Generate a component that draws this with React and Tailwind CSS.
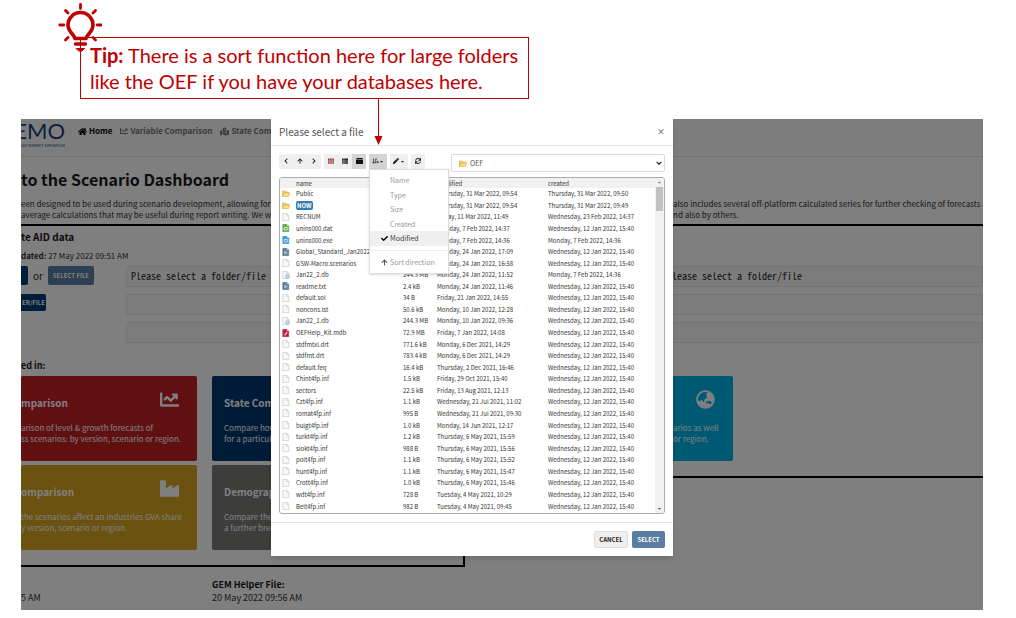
import React from "react";
import {
  FaHome, FaChartLine, FaMapMarkedAlt, FaIndustry, FaGlobeAsia,
  FaChevronLeft, FaChevronRight, FaArrowUp, FaTh, FaThList,
  FaPen, FaSync, FaCheck, FaCaretDown,
} from "react-icons/fa";

const WED = "Wednesday, 12 Jan 2022, 15:40";

const files = [
  ["folder", "Public", "", "Thursday, 31 Mar 2022, 09:54", "Thursday, 31 Mar 2022, 09:50"],
  ["folder", "NOW", "", "Thursday, 31 Mar 2022, 09:54", "Thursday, 31 Mar 2022, 09:49"],
  ["file", "RECNUM", "", "Friday, 11 Mar 2022, 11:49", "Wednesday, 23 Feb 2022, 14:37"],
  ["green", "unins000.dat", "", "Monday, 7 Feb 2022, 14:37", WED],
  ["blue", "unins000.exe", "", "Monday, 7 Feb 2022, 14:36", "Monday, 7 Feb 2022, 14:36"],
  ["slate", "Global_Standard_Jan2022", "", "Monday, 24 Jan 2022, 17:09", WED],
  ["file", "GSW-Macro.scenarios", "", "Monday, 24 Jan 2022, 16:58", WED],
  ["db", "Jan22_2.db", "244.3 MB", "Monday, 24 Jan 2022, 11:52", "Monday, 7 Feb 2022, 14:36"],
  ["slate", "readme.txt", "2.4 kB", "Monday, 24 Jan 2022, 11:46", WED],
  ["file", "default.sol", "34 B", "Friday, 21 Jan 2022, 14:55", WED],
  ["file", "noncons.lst", "50.6 kB", "Monday, 10 Jan 2022, 12:28", WED],
  ["db", "Jan22_1.db", "244.3 MB", "Monday, 10 Jan 2022, 09:36", WED],
  ["red", "OEFHelp_Kit.mdb", "72.9 MB", "Friday, 7 Jan 2022, 14:08", WED],
  ["file", "stdfmtxl.drt", "771.6 kB", "Monday, 6 Dec 2021, 14:29", WED],
  ["file", "stdfmt.drt", "783.4 kB", "Monday, 6 Dec 2021, 14:29", WED],
  ["file", "default.feq", "16.4 kB", "Thursday, 2 Dec 2021, 16:46", WED],
  ["file", "Chint4fp.inf", "1.5 kB", "Friday, 29 Oct 2021, 15:40", WED],
  ["file", "sectors", "22.5 kB", "Friday, 13 Aug 2021, 12:13", WED],
  ["file", "Czt4fp.inf", "1.1 kB", "Wednesday, 21 Jul 2021, 11:02", WED],
  ["file", "romat4fp.inf", "995 B", "Wednesday, 21 Jul 2021, 09:30", WED],
  ["file", "bulgt4fp.inf", "1.0 kB", "Monday, 14 Jun 2021, 12:17", WED],
  ["file", "turkt4fp.inf", "1.2 kB", "Thursday, 6 May 2021, 15:59", WED],
  ["file", "slokt4fp.inf", "988 B", "Thursday, 6 May 2021, 15:56", WED],
  ["file", "polt4fp.inf", "1.1 kB", "Thursday, 6 May 2021, 15:52", WED],
  ["file", "hunt4fp.inf", "1.1 kB", "Thursday, 6 May 2021, 15:47", WED],
  ["file", "Crott4fp.inf", "1.0 kB", "Thursday, 6 May 2021, 15:46", WED],
  ["file", "wdt4fp.inf", "728 B", "Tuesday, 4 May 2021, 10:29", WED],
  ["file", "Belt4fp.inf", "982 B", "Tuesday, 4 May 2021, 09:45", WED],
];

const fills = { green: "#5cab3c", blue: "#2f97dd", slate: "#5c7790", red: "#c21f45" };

function FolderIcon({ className }) {
  return (
    <svg viewBox="0 0 16 14" className={className} aria-hidden="true">
      <path d="M1 13V2h5l1.500 2H13v2" fill="#f6cf6a" stroke="#d39a2c" />
      <path d="M1 13 3.500 6H15.500L13 13Z" fill="#fbdf8e" stroke="#d39a2c" />
    </svg>
  );
}

function FileIcon({ kind }) {
  if (kind === "folder") return <FolderIcon className="block h-[7px] w-2" />;
  const fill = fills[kind];
  return (
    <svg viewBox="0 0 16 16" className="block size-2" aria-hidden="true">
      <path d="M1.500 .7H9.500L13.500 4.700V15.300H1.500Z" fill={fill || "#f7f9f9"} stroke={fill || "#b3bbbb"} />
      <path d="M9.500 .7V4.700H13.500" fill={fill ? "#dfe9ee" : "#e3e8e8"} stroke={fill || "#b3bbbb"} />
      {(kind === "green" || kind === "blue") && <path d="M4.500 7h6v5h-6z" fill="none" stroke="#fff" strokeWidth="1.500" />}
      {kind === "slate" && <path d="M4 6.500h6M4 9h7M4 11.500h7" stroke="#dde6ee" strokeWidth="1.200" />}
      {kind === "red" && <path d="M4 12.500 9.500 6l1.500 1.500L5.500 13Z" fill="#fff" />}
      {kind === "db" && <circle cx="11" cy="11" r="4" fill="#c3d5e6" stroke="#8aa5bd" />}
    </svg>
  );
}

function Bulb() {
  return (
    <svg viewBox="0 0 44 50" className="absolute -top-[35px] -left-[23px] h-[50px] w-11" fill="none" stroke="#c00000" strokeLinecap="round" aria-hidden="true">
      <path d="M17 35.500C16 31 10 29 10 22a12.500 12.500 0 0 1 25 0c0 7-6 9-7 13.500Z" fill="#fff" strokeWidth="3.600" strokeLinejoin="round" />
      <path d="M17.500 41h10" strokeWidth="3.400" />
      <path d="M18.500 45.500h8l-2.500 2.500h-3Z" fill="#c00000" strokeWidth="1" strokeLinejoin="round" />
      <path d="M22.500 1.500v4M1.800 22h4M39.200 22h4M7.500 7.500l2.500 2.500M37.500 7.500l-2.500 2.500M7.500 37l2.500-2.500M37.500 37l-2.500-2.500" strokeWidth="2.800" />
    </svg>
  );
}

function SortIcon() {
  return (
    <svg viewBox="0 0 16 14" className="h-[6px] w-[7px]" fill="none" stroke="#222" strokeWidth="1.800" aria-hidden="true">
      <path d="M3.500 1v11M1 9.500l2.500 3 2.500-3M8.500 1.500v11M11 12l2-5 2 5M9.500 2.500h2" />
    </svg>
  );
}

function DetailIcon() {
  return (
    <svg viewBox="0 0 14 12" className="h-[6px] w-[7px]" aria-hidden="true">
      <path d="M1 0h12v2.200H1zM0 3.200h14V12H0z" fill="#111" />
    </svg>
  );
}

function Card({ color, title, lines, icon }) {
  return (
    <a href="#" className={`block h-[85px] overflow-hidden rounded-[2px] pt-[17px] text-white ${color}`}>
      <div className="flex h-5 items-center justify-between pr-[18px]">
        <span className="text-[10px] leading-5 font-bold whitespace-nowrap">{title}</span>
        <span className="-mt-2 text-[19px]">{icon}</span>
      </div>
      <p className="mt-[9px] text-[8px] leading-[11px] whitespace-nowrap">
        {lines[0]}<br />{lines[1]}
      </p>
    </a>
  );
}

function PathField({ label, value }) {
  return (
    <input
      aria-label={label}
      readOnly
      defaultValue={value}
      className="h-[21px] w-full rounded-[2px] border border-[#e8e8e8] bg-[#f9f9f9] px-1 pb-[2px] font-['Noto_Sans_Mono_CJK_SC','Liberation_Mono',monospace] text-[10px] text-[#222]"
    />
  );
}

function Dashboard() {
  return (
    <div className="h-[491px] overflow-hidden bg-white text-[#333]">
      <nav className="flex h-[38px] items-start border-b border-[#e4e4e4] bg-[#fafafa]">
        <a href="#" className="mr-[13px] flex w-11 flex-col items-end overflow-hidden text-[#1c3f7c]">
          <span className="font-['Lato',sans-serif] text-[22px] leading-6">EMO</span>
          <span className="text-[4px] leading-[4px] whitespace-nowrap">NERGY MARKET OPERATOR</span>
        </a>
        <div className="flex gap-2 pt-[5px] text-[8px] leading-[14px] font-bold whitespace-nowrap text-[#777]">
          <a href="#" className="flex items-center gap-[2px] text-black"><FaHome className="text-[9px]" />Home</a>
          <a href="#" className="flex items-center gap-[2px]"><FaChartLine />Variable Comparison</a>
          <a href="#" className="flex items-center gap-[2px]"><FaMapMarkedAlt className="text-[9px]" />State Com</a>
        </div>
      </nav>
      <h1 className="mt-[9px] text-[16px] leading-[26px] font-bold whitespace-nowrap text-[#1a1a1a]">to the Scenario Dashboard</h1>
      <div className="mt-[6px] flex justify-between text-[8px] leading-[11px] whitespace-nowrap">
        <p className="w-[251px]">een designed to be used during scenario development, allowing for s<br />average calculations that may be useful during report writing. We will</p>
        <p className="w-[310px]">also includes several off-platform calculated series for further checking of forecasts a<br />nd also by others.</p>
      </div>
      <div className="mt-1 flex items-start">
        <section className="h-[343px] w-[444px] shrink-0 border-y-2 border-r-2 border-black">
          <h2 className="mt-[3px] text-[10px] leading-4 font-bold text-[#1a1a1a]">te AID data</h2>
          <p className="mt-[5px] text-[8px] leading-3"><b>dated:</b> 27 May 2022 09:51 AM</p>
          <div className="mt-1 flex">
            <div className="w-[105px] shrink-0">
              <div className="flex h-[19px] items-center">
                <button type="button" aria-label="Select folder" className="h-[19px] w-[7px] rounded-r-[2px] bg-[#003a78]" />
                <span className="px-[5px] text-[10px]">or</span>
                <button type="button" className="h-[19px] w-[46px] rounded-[2px] bg-[#5b7ea4] text-[6px] font-bold text-white">SELECT FILE</button>
              </div>
              <button type="button" className="mt-[9px] block h-[17px] w-[25px] rounded-r-[2px] bg-[#003a78] text-[6px] font-bold text-white">ER/FILE</button>
            </div>
            <div className="flex grow flex-col gap-[7px]">
              <PathField label="First path" value="Please select a folder/file" />
              <PathField label="First path, line 2" value="" />
              <PathField label="First path, line 3" value="" />
            </div>
          </div>
          <h2 className="mt-[15px] text-[9px] leading-4 font-bold text-[#1a1a1a]">ed in:</h2>
          <div className="mt-[2px] grid grid-cols-[176px_176px] gap-x-[15px] gap-y-1">
            <Card color="bg-[#c22024]" title="mparison" lines={["arison of level & growth forecasts of", "ss scenarios: by version, scenario or region."]} icon={<FaChartLine />} />
            <Card color="bg-[#003670] pl-3" title="State Com" lines={["Compare how", "for a particul"]} />
            <Card color="bg-[#d6a520]" title="omparison" lines={["the scenarios affect an industries GVA share", "y version, scenario or region."]} icon={<FaIndustry />} />
            <Card color="bg-[#7a7a76] pl-3" title="Demograp" lines={["Compare the", "a further brea"]} />
          </div>
        </section>
        <section className="ml-6 h-[254px] grow border-y-2 border-l-2 border-black pt-10">
          <div className="ml-[171px] flex flex-col gap-[7px]">
            <PathField label="Second path" value="Please select a folder/file" />
            <PathField label="Second path, line 2" value="" />
            <PathField label="Second path, line 3" value="" />
          </div>
          <div className="mt-[33px] ml-[66px] w-[176px]">
            <Card color="bg-[#00b2e6] pl-[116px]" title="" lines={["arios as well", "or region."]} icon={<FaGlobeAsia />} />
          </div>
        </section>
      </div>
      <footer className="mt-[11px] flex text-[9px] leading-[13px] whitespace-nowrap">
        <p className="w-[191px] pt-[13px]">5 AM</p>
        <p><b className="text-[#1a1a1a]">GEM Helper File:</b><br />20 May 2022 09:56 AM</p>
      </footer>
    </div>
  );
}

function ToolButton({ label, active, wide, children }) {
  return (
    <button
      type="button"
      aria-label={label}
      className={`flex h-[15px] items-center justify-center pb-px text-[6px] text-[#222] ${wide ? "w-[18px]" : "w-[14px]"} ${active ? "bg-[#d4d4d4]" : "bg-[#efefef]"}`}
    >
      {children}
    </button>
  );
}

function SortMenu() {
  return (
    <div role="menu" className="absolute top-[15px] left-0 z-10 w-20 border border-[#dcdcdc] bg-white pt-[3px] text-[7px] text-[#999] shadow">
      <div className="grid h-[73px] grid-rows-5">
        {["Name", "Type", "Size", "Created", "Modified"].map((item) => (
          <button
            key={item}
            type="button"
            role="menuitem"
            className={`flex items-center ${item === "Modified" ? "bg-[#f0f0f0] text-[#444]" : ""}`}
          >
            <span className="flex w-5 justify-end pr-[2px] text-[7px] text-black">{item === "Modified" && <FaCheck />}</span>
            {item}
          </button>
        ))}
      </div>
      <button type="button" role="menuitem" className="mt-1 flex h-[23px] w-full items-center border-t border-[#eee]">
        <span className="flex w-5 justify-end pr-[2px] text-[7px] text-[#555]"><FaArrowUp /></span>
        Sort direction
      </button>
    </div>
  );
}

function FileDialog() {
  return (
    <div role="dialog" aria-label="Please select a file" className="w-[402px] bg-white text-[#333] shadow-md">
      <header className="flex h-[27px] items-center justify-between border-b border-[#e5e5e5] px-2">
        <h2 className="text-[10px] leading-3 text-[#555]">Please select a file</h2>
        <button type="button" aria-label="Close" className="text-[8px] leading-3 font-bold text-[#777]">×</button>
      </header>
      <div className="px-2 pt-2">
        <div className="flex items-start justify-between">
          <div className="flex gap-[3px]">
            <div className="flex">
              <ToolButton label="Back"><FaChevronLeft /></ToolButton>
              <ToolButton label="Up"><FaArrowUp /></ToolButton>
              <ToolButton label="Forward"><FaChevronRight /></ToolButton>
            </div>
            <div className="flex">
              <ToolButton label="Icon view"><FaTh className="text-[#8f3d30]" /></ToolButton>
              <ToolButton label="List view"><FaThList /></ToolButton>
              <ToolButton label="Detail view" active><DetailIcon /></ToolButton>
            </div>
            <div className="relative">
              <ToolButton label="Sort" active wide><SortIcon /><FaCaretDown className="text-[5px]" /></ToolButton>
              <SortMenu />
            </div>
            <ToolButton label="Edit" wide><FaPen /><FaCaretDown className="ml-px text-[5px]" /></ToolButton>
            <ToolButton label="Refresh"><FaSync /></ToolButton>
          </div>
          <div className="relative h-[18px] w-[214px]">
            <select aria-label="Folder" className="block h-[18px] w-full appearance-none rounded-[2px] border border-[#d5dde2] bg-white pl-[18px] text-[7px] leading-4 text-[#555]">
              <option>OEF</option>
            </select>
            <FolderIcon className="pointer-events-none absolute top-[6px] left-2 h-[7px] w-2" />
            <svg viewBox="0 0 10 6" className="pointer-events-none absolute top-[7px] right-[3px] h-1 w-[6px]" aria-hidden="true">
              <path d="m1 1 4 4 4-4" fill="none" stroke="#222" strokeWidth="2" />
            </svg>
          </div>
        </div>
        <div className="mt-[5px] flex h-[337px] overflow-hidden rounded-[3px] border border-[#aaa]">
          <table className="h-[334px] grow table-fixed border-collapse text-left text-[6px] leading-[9px] whitespace-nowrap">
            <colgroup>
              <col className="w-4" /><col className="w-[107px]" /><col className="w-[34px]" /><col className="w-[111px]" /><col />
            </colgroup>
            <thead>
              <tr className="h-[10px] bg-[#f1f1f1]">
                <th className="p-0" aria-label="Type" />
                <th className="p-0 font-normal">name</th>
                <th className="p-0" aria-label="Size" />
                <th className="p-0 font-normal">modified</th>
                <th className="p-0 font-normal">created</th>
              </tr>
            </thead>
            <tbody>
              {files.map(([kind, name, size, modified, created]) => (
                <tr key={name}>
                  <td className="p-0 pl-[2px]"><FileIcon kind={kind} /></td>
                  <td className="p-0">
                    {name === "NOW" ? <span className="rounded-[2px] bg-[#337ab7] px-px font-bold text-white">NOW</span> : name}
                  </td>
                  <td className="p-0">{size}</td>
                  <td className="p-0">{modified}</td>
                  <td className="p-0">{created}</td>
                </tr>
              ))}
            </tbody>
          </table>
          <div className="flex w-[9px] flex-col items-center justify-between bg-[#f1f1f1] text-[5px] text-[#444]">
            <div className="w-full">
              <FaCaretDown className="mx-auto my-[2px] rotate-180 text-[#888]" />
              <div className="mx-px h-6 bg-[#c1c1c1]" />
            </div>
            <FaCaretDown className="mb-[2px]" />
          </div>
        </div>
      </div>
      <footer className="mt-2 flex h-[34px] items-center justify-end gap-1 border-t border-[#e5e5e5] px-2 text-[6px] font-bold">
        <button type="button" className="h-[17px] w-[34px] rounded-[2px] border border-[#ddd] bg-[#efefef] text-[#222]">CANCEL</button>
        <button type="button" className="h-[17px] w-[33px] rounded-[2px] bg-[#5a7ea2] text-white">SELECT</button>
      </footer>
    </div>
  );
}

export default function App() {
  return (
    <main className="bg-white pr-[33px] pb-2 pl-[21px] font-['Noto_Sans_CJK_SC',sans-serif]">
      <div className="flex h-[119px] items-start pt-[37px] pl-[59px]">
        <aside className="relative h-[62px] w-[449px] border border-[#c00000] px-[9px] pt-1 font-['Lato',sans-serif] text-[20px] leading-[26px] whitespace-nowrap text-[#c00000]">
          <Bulb />
          <p className="relative"><b>Tip:</b> There is a sort function here for large folders<br />like the OEF if you have your databases here.</p>
          <svg viewBox="0 0 9 46" className="absolute top-[61px] left-[293px] z-20 h-[46px] w-[9px]" aria-hidden="true">
            <path d="M4.500 0V38" stroke="#c00000" />
            <path d="M.5 37h8L4.500 46Z" fill="#c00000" />
          </svg>
        </aside>
      </div>
      <div className="relative overflow-hidden">
        <Dashboard />
        <div className="absolute inset-0 flex items-start justify-center bg-black/50 pr-[60px]">
          <FileDialog />
        </div>
      </div>
    </main>
  );
}
